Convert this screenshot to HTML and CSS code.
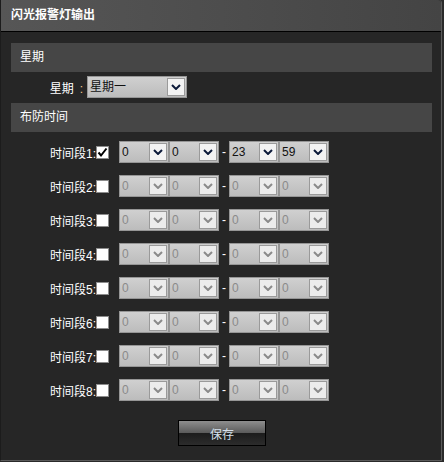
FILE: index.html
```html
<!DOCTYPE html>
<html lang="zh-CN">
<head>
  <meta charset="UTF-8" />
  <title>闪光报警灯输出</title>
  <link rel="stylesheet" href="styles.css">
</head>
<body>
  <div class="window">
    <div class="title">闪光报警灯输出</div>

    <div class="content">
      <div class="section">星期</div>
      <div class="week-row">
        <span class="week-label">星期<span class="colon">:</span></span>
        <div class="sel wide">
          <select><option>星期一</option></select>
          <span class="arrow"><svg width="10" height="6" viewBox="0 0 10 6"><path d="M1 1 L5 5 L9 1" /></svg></span>
        </div>
      </div>

      <div class="section">布防时间</div>
      <div class="periods" id="periods"></div>

      <div class="actions">
        <button class="save">保存</button>
      </div>
    </div>
  </div>

  <script>
    const periods = document.getElementById("periods");
    const chevron = '<span class="arrow"><svg width="10" height="6" viewBox="0 0 10 6"><path d="M1 1 L5 5 L9 1" /></svg></span>';
    const check = '<svg width="11" height="11" viewBox="0 0 11 11"><path d="M1.5 5.5 L4 8.5 L9.5 1.5" /></svg>';

    function sel(value, disabled) {
      return '<div class="sel"><select' + (disabled ? ' disabled' : '') + '><option>' + value + '</option></select>' + chevron + '</div>';
    }

    for (let i = 1; i <= 8; i++) {
      const on = i === 1;
      const vals = on ? ["0", "0", "23", "59"] : ["0", "0", "0", "0"];
      const row = document.createElement("div");
      row.className = "period";
      row.innerHTML =
        '<span class="period-label">时间段' + i + ':</span>' +
        '<span class="box">' + (on ? check : '') + '</span>' +
        sel(vals[0], !on) + sel(vals[1], !on) +
        '<span class="dash">-</span>' +
        sel(vals[2], !on) + sel(vals[3], !on);
      periods.appendChild(row);
    }
  </script>
</body>
</html>
```

FILE: styles.css
```css
* {
  box-sizing: border-box;
  margin: 0;
  padding: 0;
}

html {
  background: #2a2a2a;
}

body {
  font-family: "Liberation Sans", "Noto Sans CJK SC", sans-serif;
  font-size: 12px;
  color: #fff;
}

.window {
  width: 442px;
  height: 461px;
  background: #262626;
  border-left: 1px solid #1c1c1c;
  border-right: 1px solid #5a5a5a;
  border-bottom: 1px solid #5a5a5a;
  border-top-right-radius: 3px;
}

.title {
  height: 32px;
  padding-left: 10px;
  line-height: 31px;
  font-weight: bold;
  background: linear-gradient(90deg, #565656, #444444);
  border-bottom: 1px solid #000;
  border-top-right-radius: 3px;
}

.content {
  padding: 11px 9px 0 10px;
}

.section {
  height: 29px;
  line-height: 29px;
  padding-left: 9px;
  background: #464646;
}

.week-row {
  display: flex;
  align-items: center;
  height: 22px;
  margin: 4px 0 5px;
}

.week-label {
  width: 76px;
  text-align: right;
  padding-right: 4px;
}

.colon {
  color: #f2c98a;
  margin-left: 6px;
}

/* combo boxes */
.sel {
  position: relative;
  width: 50px;
  height: 22px;
}

.sel.wide {
  width: 100px;
}

.sel select {
  appearance: none;
  width: 100%;
  height: 100%;
  padding-left: 2px;
  font-family: inherit;
  font-size: 12px;
  color: #111;
  background: linear-gradient(#d0d0d0, #bcbcbc);
  border: 1px solid #969696;
  border-radius: 0;
  outline: none;
}

.sel select:disabled {
  color: #8a8a8a;
  opacity: 1;
}

.sel .arrow {
  position: absolute;
  top: 2px;
  right: 2px;
  width: 18px;
  height: 18px;
  display: flex;
  align-items: center;
  justify-content: center;
  background: #f3f3f3;
  border: 1px solid #9a9a9a;
  pointer-events: none;
}

.sel .arrow path {
  fill: none;
  stroke: #0c1a3a;
  stroke-width: 2;
}

.sel select:disabled + .arrow {
  background: #ececec;
}

.sel select:disabled + .arrow path {
  stroke: #8a8a8a;
}

/* periods */
.periods {
  display: flex;
  flex-direction: column;
  gap: 12px;
  margin-top: 9px;
}

.period {
  display: flex;
  align-items: center;
  height: 22px;
}

.period-label {
  width: 85px;
  text-align: right;
}

.box {
  width: 13px;
  height: 13px;
  margin-right: 10px;
  display: flex;
  align-items: center;
  justify-content: center;
  background: #fff;
  border: 1px solid #8c8c8c;
}

.box path {
  fill: none;
  stroke: #000;
  stroke-width: 2;
}

.dash {
  width: 10px;
  text-align: center;
}

.actions {
  display: flex;
  justify-content: center;
  margin-top: 19px;
  padding-left: 1px;
}

.save {
  width: 88px;
  height: 26px;
  font-family: inherit;
  font-size: 12px;
  color: #d6e0ec;
  border: 1px solid #000;
  background: linear-gradient(#8e8e8e 0%, #5c5c5c 48%, #1c1c1c 50%, #2c2c2c 100%);
  cursor: pointer;
}
```
